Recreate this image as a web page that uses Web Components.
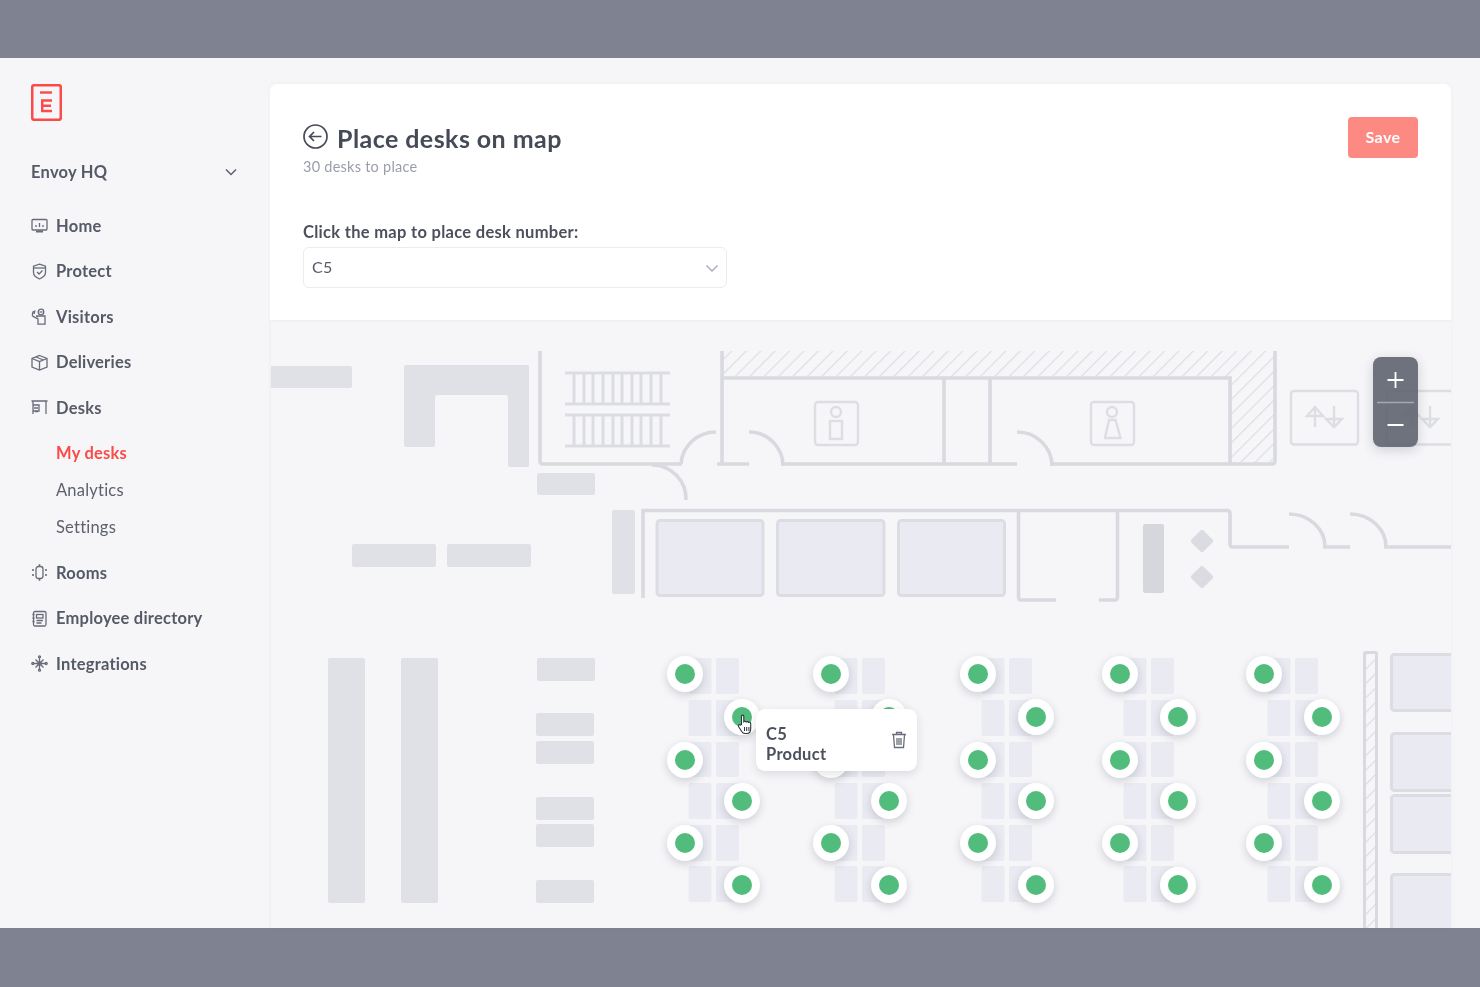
<!DOCTYPE html>
<html lang="en"><head><meta charset="utf-8"><title>Place desks on map</title>
<style>
html,body{margin:0;padding:0;background:#7f8391;}
body{font-family:Lato,"Noto Sans",sans-serif;}
</style></head><body>
<app-frame>
  <side-nav slot="side">
    <nav-item icon="home">Home</nav-item>
    <nav-item icon="protect">Protect</nav-item>
    <nav-item icon="visitors">Visitors</nav-item>
    <nav-item icon="deliveries">Deliveries</nav-item>
    <nav-item icon="desks">Desks</nav-item>
    <sub-group>
      <sub-item active>My desks</sub-item>
      <sub-item>Analytics</sub-item>
      <sub-item>Settings</sub-item>
    </sub-group>
    <nav-item icon="rooms">Rooms</nav-item>
    <nav-item icon="directory">Employee directory</nav-item>
    <nav-item icon="integrations">Integrations</nav-item>
  </side-nav>
  <page-header slot="main"></page-header>
  <floor-map slot="main"></floor-map>
</app-frame>
<script>
const def=(n,html,proto)=>{customElements.define(n,class extends HTMLElement{
  constructor(){super();this.attachShadow({mode:'open'}).innerHTML=typeof html==='function'?html(this):html;}
  connectedCallback(){if(proto)proto.call(this);}
});};

def('app-frame',`<style>
:host{display:flex;flex-direction:column;width:1480px;height:987px;background:#7f8391;overflow:hidden;filter:blur(.5px)}
.bar{height:58px;flex:none}
.mid{height:870px;flex:none;display:flex;background:#f6f6f9}
.side{width:270px;flex:none}
.main{width:1181px;flex:none;margin-top:26px;display:flex;flex-direction:column;box-shadow:0 0 3px rgba(60,65,80,.05)}
</style><div class="bar"></div><div class="mid"><div class="side"><slot name="side"></slot></div><div class="main"><slot name="main"></slot></div></div>`);

def('side-nav',`<style>
:host{display:block;padding:26px 0 0 31px;color:#555a67}
.logo{display:block;width:31px;height:37px}
.org{display:flex;align-items:center;justify-content:space-between;width:207px;height:24px;margin-top:39px;margin-bottom:19px;font-size:16.5px;font-weight:700;letter-spacing:.25px}
</style>
<svg class="logo" viewBox="0 0 31 37" fill="none"><rect x="1.2" y="1.2" width="28.6" height="34.6" rx="2" stroke="#fb4b48" stroke-width="2.6"/><path d="M9 8.500h12" stroke="#fb4b48" stroke-width="2.400"/><path d="M21 16.500H11.200v10.500H21M11.200 21.700H20" stroke="#fb4b48" stroke-width="2.400"/></svg>
<div class="org"><span>Envoy HQ</span><svg width="14" height="14" viewBox="0 0 14 14" fill="none"><path d="M2 4.5l5 5 5-5" stroke="#5b606c" stroke-width="1.5"/></svg></div>
<slot></slot>`);

const ICONS={
home:'<rect x="1" y="2.5" width="15" height="10.5" rx="1"/><path d="M5 10V8M8.5 10V6M12 10V8" /><path d="M5 14.500h7" stroke-width="2"/>',
protect:'<path d="M8.5 1.2l6 2v6.3c0 3-3 5.2-6 6.5-3-1.3-6-3.5-6-6.5V3.2z"/><path d="M3 5h11"/><path d="M6 9l2 2 3.5-3.5"/>',
visitors:'<circle cx="10" cy="4" r="2.8"/><path d="M8.5 4h3"/><path d="M5 8h9v8.2H7V11L2.5 8.7C1.3 8 1.2 6.500 1.500 5.500L2.500 3M4 2.500L3 6M7 9l-1.500-1"/>',
deliveries:'<path d="M8.500 1.500L16 4.500v8.500l-7.500 3-7.500-3V4.500z"/><path d="M1 4.500l7.500 3 7.500-3M8.500 7.500V16M5 3l7.500 3"/>',
desks:'<path d="M.5 2h16M2 2v13M15 2v13M2 6h6v6H2M3 9h4M4 12.500h3"/>',
rooms:'<rect x="5" y="2.500" width="7" height="12" rx="2.500"/><path d="M8.500 .3v1.700M8.500 15v1.700M2 5v2M2 10v2M15 5v2M15 10v2" stroke-width="1.600"/>',
directory:'<rect x="2.500" y="1.500" width="12.500" height="14.500" rx="1.500"/><rect x="5.500" y="4.500" width="6.500" height="3.500"/><path d="M5.500 10.500h6.500M5.500 13h5M1.500 4.500h2M1.500 8h2M1.500 11.500h2"/>',
integrations:'<path d="M8.500 2.500v12M2.500 8.500h12M4.500 4.500l8 8M12.500 4.500l-8 8"/><circle cx="8.500" cy="1.800" r="1"/><circle cx="8.500" cy="15.200" r="1"/><circle cx="1.800" cy="8.500" r="1"/><circle cx="15.200" cy="8.500" r="1"/><circle cx="8.500" cy="8.500" r="1.500"/>'
};
def('nav-item',el=>`<style>
:host{display:flex;align-items:center;height:45.5px;font-size:16.5px;font-weight:700;letter-spacing:.22px;color:#555a67}
svg{width:17px;height:17px;margin-right:8px;flex:none;fill:none;stroke:#686c78;stroke-width:1.3}
</style><svg viewBox="0 0 17 17">${ICONS[el.getAttribute('icon')]}</svg><slot></slot>`);
def('sub-group',`<style>:host{display:block;padding:4px 0 4px}</style><slot></slot>`);
def('sub-item',el=>`<style>
:host{display:flex;align-items:center;height:37.2px;padding-left:25px;font-size:16.500px;letter-spacing:.22px;font-weight:${el.hasAttribute('active')?700:400};color:${el.hasAttribute('active')?'#fb4b48':'#5d616d'}}
</style><slot></slot>`);

def('page-header',`<style>
:host{display:block;height:238px;box-sizing:border-box;background:#fff;border-radius:8px 8px 0 0;border-bottom:2px solid #f0f0f3;padding:37px 33px 0;color:#454a57}
.top{display:flex;justify-content:space-between;align-items:flex-start;height:57px}
.tl{display:flex;flex-direction:column}
.title{display:flex;align-items:center;gap:9px;height:30px}
h1{margin:0;font-size:25px;font-weight:700;letter-spacing:.44px;line-height:30px;padding-top:3px}
.sub{font-size:14.500px;color:#9a9eab;margin-top:7px;letter-spacing:.25px;line-height:18px}
.save{width:70px;height:41px;margin-top:-4px;border-radius:4px;background:#fd8a82;color:#fff;font-size:16px;font-weight:700;letter-spacing:.4px;display:flex;align-items:center;justify-content:center;padding-bottom:2px;box-sizing:border-box}
label{display:block;margin-top:44px;font-size:16.500px;font-weight:700;letter-spacing:.3px;color:#4c505c;line-height:20px}
</style>
<div class="top"><div class="tl"><div class="title"><svg width="25" height="25" viewBox="0 0 25 25" fill="none" stroke="#454a57" stroke-width="1.700"><circle cx="12.500" cy="12.500" r="11.500"/><path d="M18.500 12.500H7M11 8l-4.500 4.500L11 17"/></svg><h1>Place desks on map</h1></div><div class="sub">30 desks to place</div></div><div class="save">Save</div></div>
<label>Click the map to place desk number:</label>
<desk-select></desk-select>`);

def('desk-select',`<style>
:host{display:flex;align-items:center;justify-content:space-between;box-sizing:border-box;width:424px;height:41px;margin-top:5px;padding:0 7px 2px 8px;border:1px solid #ececf0;border-radius:6px;background:#fff;font-size:16px;color:#555a67;letter-spacing:.3px}
svg{margin-top:2px}
</style><span>C5</span><svg width="14" height="14" viewBox="0 0 14 14" fill="none"><path d="M1.500 4.500L7 10l5.500-5.500" stroke="#a6a9b3" stroke-width="1.300"/></svg>`);

function mapSvg(){
  const W='#d9dae0';
  let s='';
  const r=(x,y,x2,y2,f='#e0e1e6',rx=2)=>`<rect x="${x}" y="${y}" width="${x2-x}" height="${y2-y}" rx="${rx}" fill="${f}"/>`;
  const room=(x,y,x2,y2)=>`<rect x="${x+1.500}" y="${y+1.500}" width="${x2-x-3}" height="${y2-y-3}" rx="3" fill="#e9eaf2" stroke="#dcdde3" stroke-width="3"/>`;
  s+=`<defs><pattern id="h" patternUnits="userSpaceOnUse" width="10.200" height="10.200" patternTransform="rotate(45)"><path d="M0 0V10.200" stroke="#dcdde3" stroke-width="2.400"/></pattern></defs>`;
  s+=r(262,366,352,388);
  s+=`<path d="M406 365h121a2 2 0 0 1 2 2v98a2 2 0 0 1-2 2h-17a2 2 0 0 1-2-2V397a2 2 0 0 0-2-2H437a2 2 0 0 0-2 2v48a2 2 0 0 1-2 2h-27a2 2 0 0 1-2-2V367a2 2 0 0 1 2-2z" fill="#e0e1e6"/>`;
  s+=r(537,473,595,495)+r(352,544,436,567)+r(447,544,531,567)+r(612,510,635,594);
  s+=r(328,658,365,903)+r(401,658,438,903);
  s+=r(537,658,595,681);
  [[713,736],[741,764],[797,820],[824,847],[880,903]].forEach(a=>s+=r(536,a[0],594,a[1]));
  s+=r(1143,524,1164,593,'#d6d7dc');
  [541,577].forEach(y=>s+=`<rect x="1193.500" y="${y-8.500}" width="17" height="17" rx="2" transform="rotate(45 1202 ${y})" fill="#dbdce1"/>`);
  s+=`<rect x="722" y="351" width="553" height="27" fill="url(#h)"/><rect x="1230" y="378" width="45" height="86" fill="url(#h)"/><rect x="1365" y="652" width="11" height="280" fill="url(#h)"/>`;
  s+=room(655.500,519,764.500,597)+room(776,519,885.500,597)+room(897,519,1006,597);
  s+=room(1390,653,1470,712)+room(1390,732,1470,792)+room(1390,794,1470,854)+room(1390,873,1470,950);
  s+=`<g fill="none" stroke="${W}" stroke-width="3.600">
  <path d="M540 351V461q0 3 3 3H682"/>
  <path d="M681 464A35 34 0 0 1 716 432"/><path d="M652 465A34 34 0 0 1 686 500"/>
  <path d="M722 351V464M717 464H749"/><path d="M749 432A34 34 0 0 1 783 466"/>
  <path d="M722 378H1230V464M944 378V464M990 378V464M783 464H1017M1052 464H1272q3 0 3-3V351"/>
  <path d="M1017 432A35 34 0 0 1 1052 466"/>
  <path d="M643 598V510.500H1227q3 0 3 3V544q0 3 3 3H1289"/>
  <path d="M1018.500 510.500V597q0 3 3 3H1056M1117.500 510.500V597q0 3-3 3H1099"/>
  <path d="M1289 514A36 33 0 0 1 1325 547M1323 547H1350M1350 514A36 33 0 0 1 1386 547M1384 547H1460"/>
  <rect x="1364.500" y="652.500" width="12" height="290" rx="1" stroke-width="3"/>
  </g>`;
  s+=`<g fill="none" stroke="#dcdde3" stroke-width="3"><path d="M565 373H670M565 404H670M565 415H670M565 446H670"/>`;
  [574,584,593,603,613,622,632,641,651,661].forEach(x=>s+=`<path d="M${x} 373V404M${x} 415V446"/>`);
  s+=`</g>`;
  s+=`<g fill="none" stroke="#dddee4" stroke-width="2.400">
  <rect x="815" y="402" width="43" height="43" rx="3"/><circle cx="836" cy="412" r="5"/><rect x="830" y="421" width="12" height="18"/>
  <rect x="1091" y="402" width="43" height="43" rx="3"/><circle cx="1112" cy="412" r="5"/><path d="M1109 420H1115.500L1120.500 438H1105Z"/>
  <rect x="1291" y="391" width="67" height="53.500" rx="3"/>
  <path d="M1315 427V407M1307 416L1315 407L1323 416ZM1334 406V426M1326 419L1334 427L1342 419Z"/>
  <rect x="1387" y="391" width="90" height="53.500" rx="3"/>
  <path d="M1411 427V407M1403 416L1411 407L1419 416ZM1430 406V426M1422 419L1430 427L1438 419Z"/>
  </g>`;
  [685,831,978,1120,1264].forEach(p=>{
    [[658,694],[700,736],[742,777],[783,819],[825,861],[866,902]].forEach(a=>{
      s+=r(p+3.500,a[0],p+26.500,a[1],'#e9eaf2');s+=r(p+31,a[0],p+54,a[1],'#e9eaf2');
    });
  });
  return `<svg class="plan" width="1181" height="606" viewBox="270 322 1181 606">${s}</svg>`;
}
def('floor-map',()=>`<style>
:host{display:block;position:relative;width:1181px;height:606px;overflow:hidden;background:#f6f6f9;border-left:1px solid #f0f0f3;box-sizing:border-box}
.plan{display:block;position:absolute;left:-1px;top:0}
</style>${mapSvg()}<div id="pins"></div><pin-tooltip></pin-tooltip><zoom-control></zoom-control>`,function(){
  const host=this.shadowRoot.getElementById('pins');
  const add=(x,y)=>{const p=document.createElement('map-pin');p.style.left=(x-270-1)+'px';p.style.top=(y-322)+'px';host.appendChild(p);};
  [685,831,978,1120,1264].forEach(x=>[674,760,843].forEach(y=>add(x,y)));
  [742,889,1036,1178,1322].forEach(x=>[717,801,885].forEach(y=>add(x,y)));
});
def('map-pin',`<style>
:host{position:absolute;display:block;width:36px;height:36px;margin:-18px 0 0 -18px;border-radius:50%;background:#fff;box-shadow:0 3px 9px rgba(50,55,70,.2)}
i{position:absolute;left:8px;top:8px;width:20px;height:20px;border-radius:50%;background:#52bc7c}
</style><i></i>`);
def('pin-tooltip',`<style>
:host{position:absolute;left:485px;top:387px;width:161px;height:62px;box-sizing:border-box;padding:14.500px 10px 0;background:#fff;border-radius:9px;box-shadow:0 3px 10px rgba(50,55,70,.14);color:#4c505c;font-size:16.500px;font-weight:700;letter-spacing:.3px;line-height:20.500px;display:flex;justify-content:space-between}
svg{margin-top:7px}
</style><div>C5<br>Product</div><svg width="16" height="18" viewBox="0 0 16 18" fill="none" stroke="#6a6e7a" stroke-width="1.300"><path d="M1 3.500h14M5.500 3V1.500h5V3M2.500 4l1 12.500h9l1-12.500M6 7v7M8 7v7M10 7v7"/></svg>
<svg style="position:absolute;left:-19px;top:5px;margin:0" width="16" height="21" viewBox="0 0 16 21"><path d="M4.500 10.500V2.200c0-1.500 2.300-1.500 2.300 0v5.500c.6-.8 2.200-.7 2.400.3.600-.7 2.100-.5 2.300.4.900-.5 2.200 0 2.200 1.100v5c0 3-1.500 5-4 5H8c-1.500 0-2.500-.7-3.500-2.300L1.500 12.500c-.8-1.300 1-2.500 2-1.400z" fill="#fff" stroke="#30343d" stroke-width="1.100"/><path d="M7.500 13v4M9.700 13v4M11.900 13v4" stroke="#30343d" stroke-width="1"/></svg>`);
def('zoom-control',`<style>
:host{position:absolute;left:1102px;top:35px;width:45px;height:90px;border-radius:8px;background:rgba(98,102,113,.92);box-shadow:0 3px 12px rgba(50,55,70,.2);display:flex;flex-direction:column;align-items:center}
svg{display:block}
</style><svg width="45" height="90" viewBox="0 0 45 90" fill="none"><path d="M22.500 15v16M14.500 23h16M14.500 68h16" stroke="#fff" stroke-width="1.800"/><path d="M4 45.500h37" stroke="#a4a7af" stroke-width="1.500"/></svg>`);
</script>
</body></html>
